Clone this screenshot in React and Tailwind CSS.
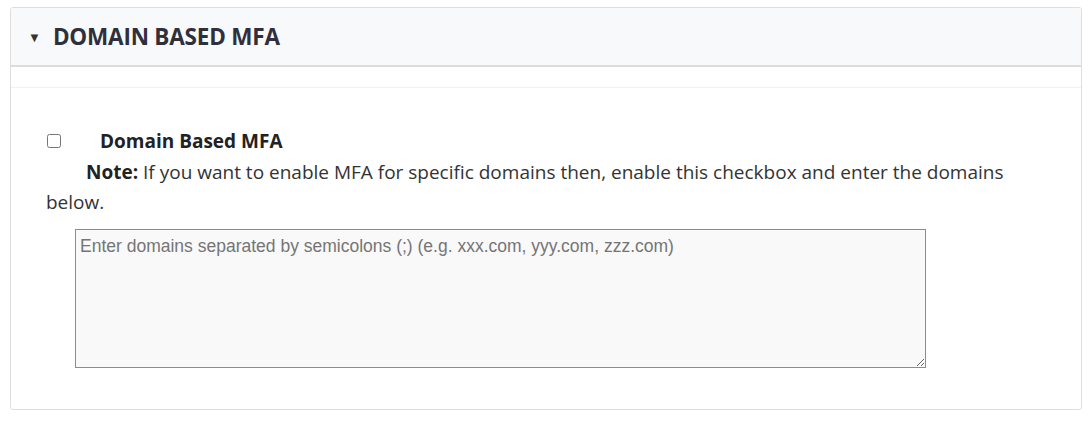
import React from 'react';

export default function App() {
    return (
        <div className="w-[1092px] h-[421px] bg-white pt-[7px] pl-[10px]" style={{ fontFamily: '"Open Sans", "Noto Sans", sans-serif' }}>
            <div className="w-[1072px] h-[403px] border border-[#dedede] rounded-[3px] overflow-hidden">
                <div className="h-[59px] bg-[#f8f9fa] border-b-2 border-[#dcdcdc] flex items-center pl-[17px]">
                    <span className="text-[13px] text-[#333] mr-[12px] mt-[2px]">▼</span>
                    <h2 className="text-[22.5px] font-bold text-[#30303c] tracking-[-0.2px] mt-[1px]">DOMAIN BASED MFA</h2>
                </div>
                <div className="h-[21px] border-b border-[#f1f1f1]"></div>
                <div className="pl-[35px] pr-[20px] pt-[41px] text-[#333] text-[19px] leading-[30px]">
                    <div className="flex items-center h-[24px]">
                        <input type="checkbox" className="w-[14px] h-[14px] ml-[1px] accent-[#555]" />
                        <span className="ml-[39px] font-bold text-[#222]">Domain Based MFA</span>
                    </div>
                    <p className="mt-[4px] pr-[40px] indent-[40px]">
                        <b className="text-[#222]">Note:</b>{' '}
                        <span>If you want to enable MFA for specific domains then, enable this checkbox and enter the domains below.</span>
                    </p>
                    <textarea
                        className="block mt-[12px] ml-[29px] w-[851px] h-[139px] border border-[#8c8c8c] bg-[#f9f9f9] px-[4px] pt-[6px] pb-[3px] text-[17.5px] leading-[20px] outline-none placeholder:text-[#757575]"
                        style={{ fontFamily: '"Liberation Sans", Arial, sans-serif' }}
                        placeholder="Enter domains separated by semicolons (;) (e.g. xxx.com, yyy.com, zzz.com)"
                    ></textarea>
                </div>
            </div>
        </div>
    );
}
